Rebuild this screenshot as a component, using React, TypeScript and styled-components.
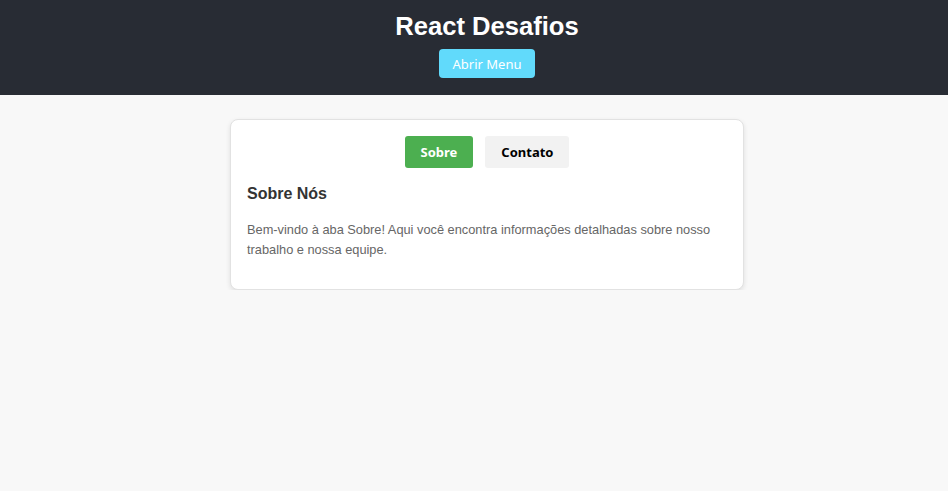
import React, { useState } from "react";
import styled, { createGlobalStyle } from "styled-components";

const GlobalStyle = createGlobalStyle`
  * { box-sizing: border-box; }
  html, body { margin: 0; padding: 0; }
  body {
    background: #f8f8f8;
    font-family: "Liberation Sans", Arial, sans-serif;
  }
`;

const Header = styled.header`
  background: #282c34;
  padding: 12px 0 17px 26px;
  display: flex;
  flex-direction: column;
  align-items: center;
`;

const Title = styled.h1`
  margin: 0;
  font-size: 25.6px;
  line-height: 28px;
  font-weight: 700;
  color: #ffffff;
  font-family: "Liberation Sans", Arial, sans-serif;
`;

const MenuButton = styled.button`
  margin-top: 9px;
  height: 29px;
  padding: 0 14px;
  border: none;
  border-radius: 4px;
  background: #61dafb;
  color: #ffffff;
  font-family: "Noto Sans", "Open Sans", sans-serif;
  font-size: 13px;
  cursor: pointer;
`;

const Main = styled.main`
  padding: 24px 0 0 26px;
  display: flex;
  justify-content: center;
`;

const Card = styled.section`
  width: 514px;
  background: #ffffff;
  border: 1px solid #e2e2e2;
  border-radius: 8px;
  box-shadow: 0 2px 5px rgba(0, 0, 0, 0.1);
  padding: 16px 16px 29px;
`;

const Tabs = styled.div`
  display: flex;
  justify-content: center;
  gap: 12px;
`;

const TabButton = styled.button<{ $active: boolean }>`
  height: 32px;
  padding: 0 16px;
  border: none;
  border-radius: 3px;
  background: ${(p) => (p.$active ? "#4caf50" : "#f2f2f2")};
  color: ${(p) => (p.$active ? "#ffffff" : "#000000")};
  font-family: "Noto Sans", "Open Sans", sans-serif;
  font-weight: 700;
  font-size: 13px;
  cursor: pointer;
`;

const Heading = styled.h2`
  margin: 15px 0 0;
  font-size: 16px;
  line-height: 22px;
  font-weight: 700;
  color: #333333;
`;

const Text = styled.p`
  margin: 15px 0 0;
  font-size: 12.8px;
  line-height: 20px;
  color: #666666;
`;

const content = {
  sobre: {
    title: "Sobre Nós",
    text: "Bem-vindo à aba Sobre! Aqui você encontra informações detalhadas sobre nosso trabalho e nossa equipe.",
  },
  contato: {
    title: "Contato",
    text: "Entre em contato conosco através do nosso e-mail ou telefone.",
  },
};

export default function App() {
  const [tab, setTab] = useState<"sobre" | "contato">("sobre");
  return (
    <>
      <GlobalStyle />
      <Header>
        <Title>React Desafios</Title>
        <MenuButton>Abrir Menu</MenuButton>
      </Header>
      <Main>
        <Card>
          <Tabs>
            <TabButton $active={tab === "sobre"} onClick={() => setTab("sobre")}>
              Sobre
            </TabButton>
            <TabButton $active={tab === "contato"} onClick={() => setTab("contato")}>
              Contato
            </TabButton>
          </Tabs>
          <Heading>{content[tab].title}</Heading>
          <Text>{content[tab].text}</Text>
        </Card>
      </Main>
    </>
  );
}
